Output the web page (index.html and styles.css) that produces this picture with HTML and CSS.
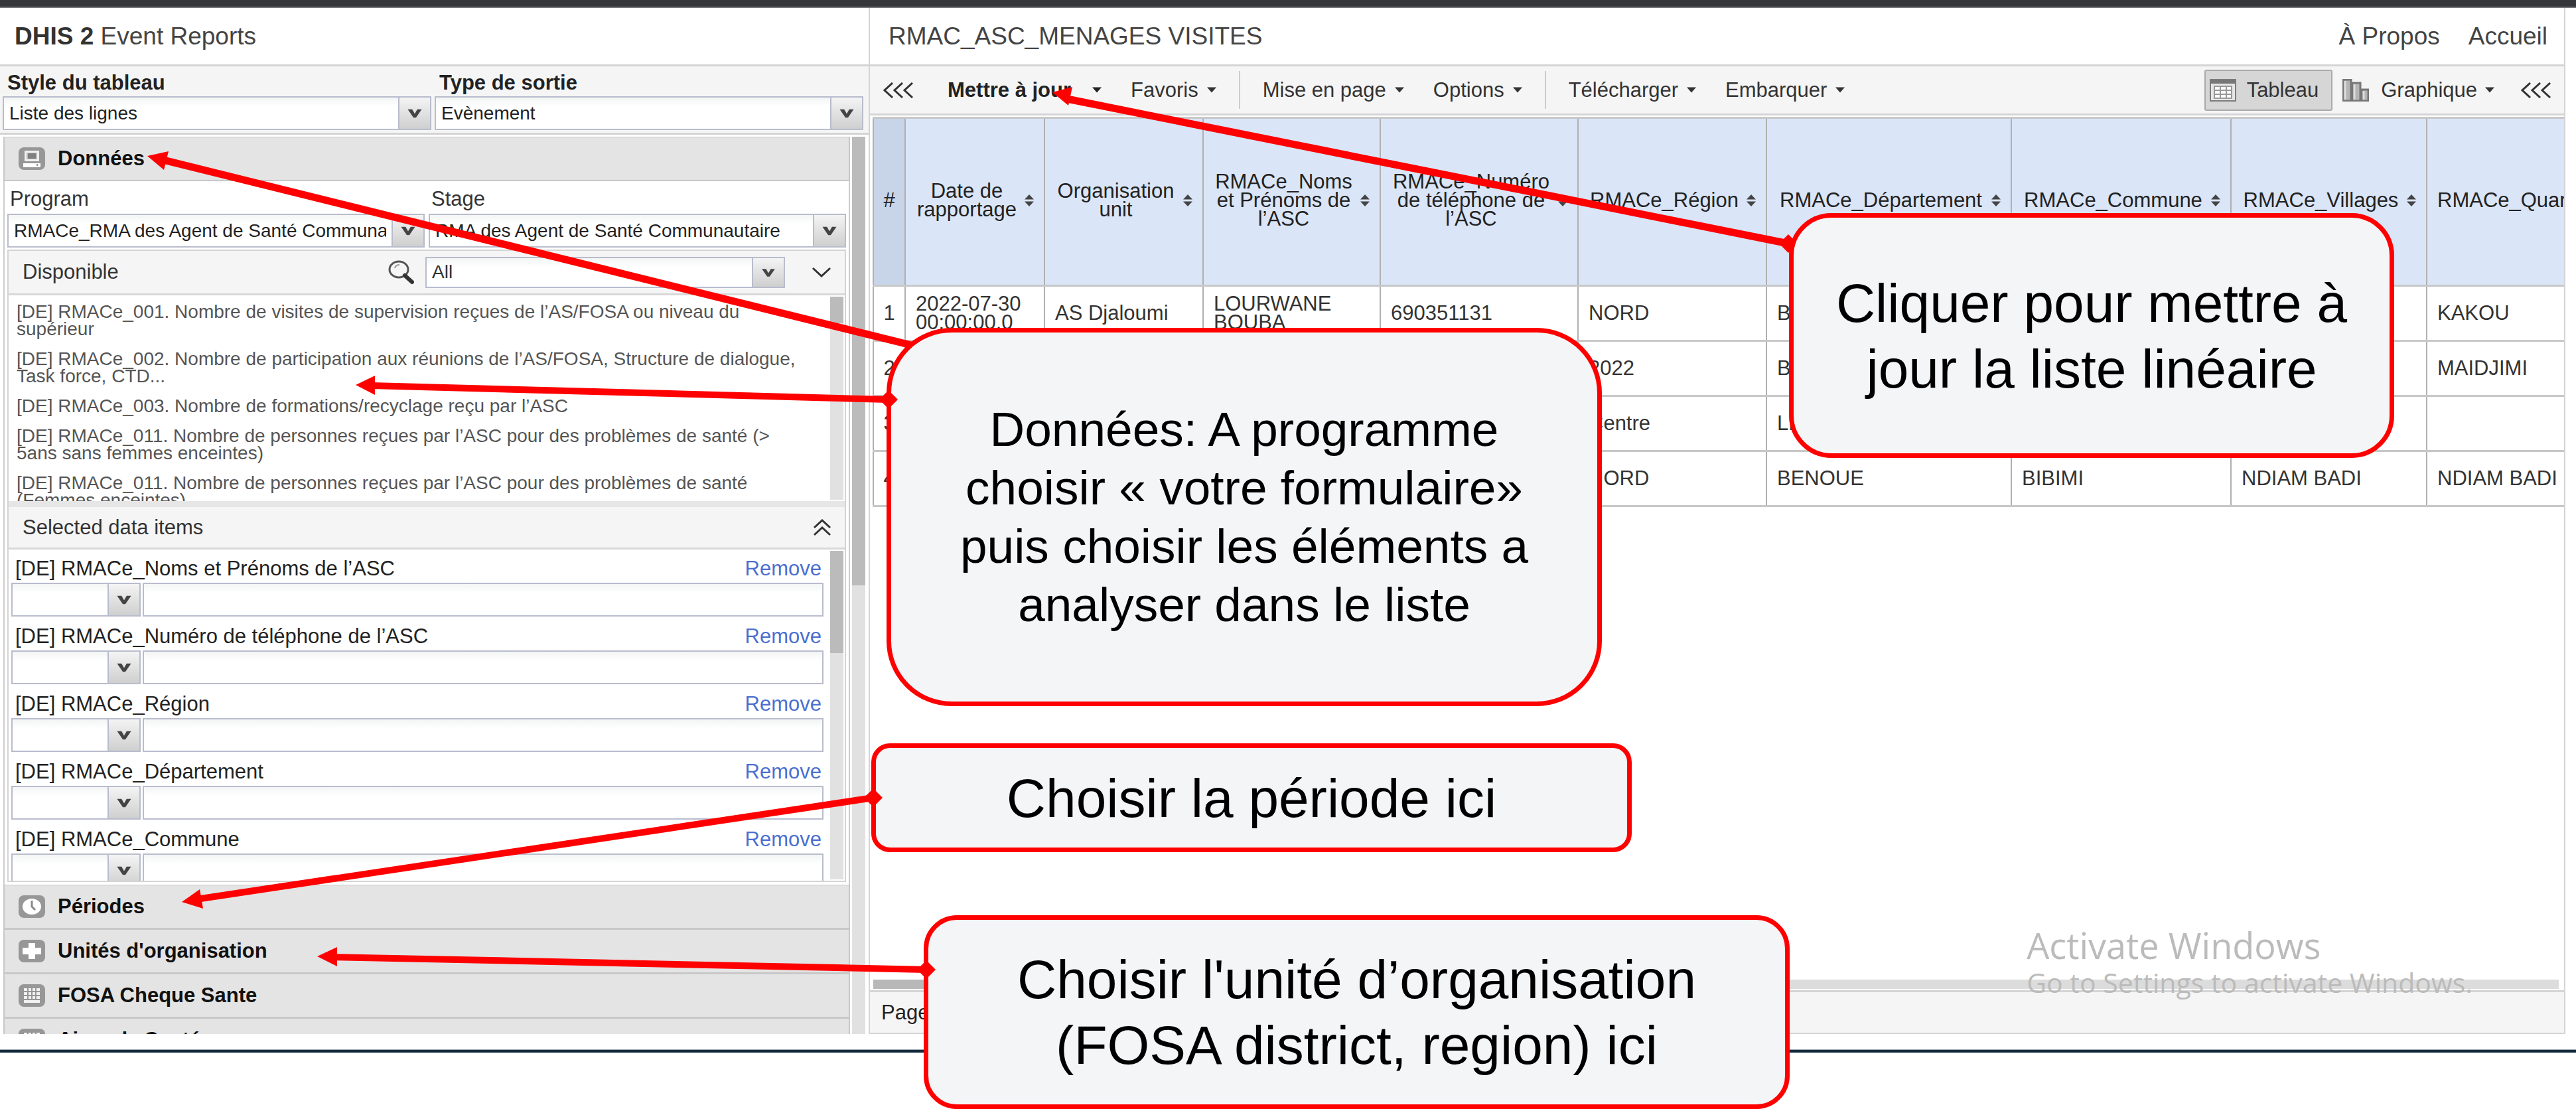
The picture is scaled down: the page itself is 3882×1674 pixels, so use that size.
FILE: index.html
```html
<!DOCTYPE html>
<html lang="fr">
<head>
<meta charset="utf-8">
<title>DHIS 2 Event Reports</title>
<link rel="stylesheet" href="styles.css">
</head>
<body>
<svg class="defs" aria-hidden="true">
  <symbol id="drop" viewBox="0 0 48 48"><path d="M13 18h7l4 7 4-7h7l-9 13h-4z" fill="#444"/></symbol>
  <symbol id="caret" viewBox="0 0 14 8"><path d="M0 0h14L7 8z" fill="currentColor"/></symbol>
  <symbol id="sort" viewBox="0 0 14 18"><path d="M0 7.500L7 0l7 7.500zM0 10.500h14L7 18z" fill="#444"/></symbol>
  <symbol id="triple" viewBox="0 0 46 24"><path d="M14 1L2 12l12 11M29 1L17 12l12 11M44 1L32 12l12 11" fill="none" stroke="#333" stroke-width="3"/></symbol>
  <symbol id="grid" viewBox="0 0 40 34"><rect width="40" height="34" rx="8" fill="#979797"/><path d="M8 6h24v22H8z" fill="#f2f2f2"/><path d="M8 11h24M8 17h24M8 23h24M14 6v17M20 6v17M26 6v17" stroke="#979797" stroke-width="2"/></symbol>
</svg>

<div class="topbar"></div>
<div class="app">
  <aside class="side">
    <header class="head"><h1 class="brand"><b>DHIS 2</b> Event Reports</h1></header>
    <div class="options">
      <div class="field">
        <label for="style">Style du tableau</label>
        <div class="combo"><select id="style"><option>Liste des lignes</option></select><svg class="trigger"><use href="#drop"/></svg></div>
      </div>
      <div class="field">
        <label for="output">Type de sortie</label>
        <div class="combo"><select id="output"><option>Evènement</option></select><svg class="trigger"><use href="#drop"/></svg></div>
      </div>
    </div>
    <div class="scroller">
      <div class="accordion">
        <button class="section"><svg class="icon" viewBox="0 0 40 34"><rect width="40" height="34" rx="8" fill="#979797"/><path d="M9 5h22v16H9z" fill="#f0f0f0"/><path d="M12 8h16v10H12z" fill="#bbb"/><path d="M14 9h12v8H14z" fill="#808080"/><path d="M7 24h26v6H7z" fill="#fff"/><path d="M28 25v3" stroke="#979797" stroke-width="2"/></svg>Données</button>
        <div class="body">
          <div class="pickers">
            <div class="field plain">
              <label for="program">Program</label>
              <div class="combo"><select id="program"><option>RMACe_RMA des Agent de Santé Communautaire</option></select><svg class="trigger"><use href="#drop"/></svg></div>
            </div>
            <div class="field plain">
              <label for="stage">Stage</label>
              <div class="combo"><select id="stage"><option>RMA des Agent de Santé Communautaire</option></select><svg class="trigger"><use href="#drop"/></svg></div>
            </div>
          </div>
          <div class="frame">
            <div class="bar">
              <span class="bar-title">Disponible</span>
              <button class="tool" aria-label="Rechercher"><svg width="40" height="38" viewBox="0 0 40 38"><ellipse cx="17" cy="15" rx="14" ry="12" fill="#f5f5f5" stroke="#555" stroke-width="3"/><path d="M11 13c1-4 4-5 7-5" fill="none" stroke="#999" stroke-width="2"/><path d="M26 24l11 10" stroke="#333" stroke-width="6" stroke-linecap="round"/></svg></button>
              <div class="combo filter"><select aria-label="Type d’élément"><option>All</option></select><svg class="trigger"><use href="#drop"/></svg></div>
              <button class="tool" aria-label="Ajouter"><svg width="30" height="16" viewBox="0 0 30 16"><path d="M2 2l13 12L28 2" fill="none" stroke="#333" stroke-width="3"/></svg></button>
            </div>
            <div class="available">
              <ul class="items">
                <li>[DE] RMACe_001. Nombre de visites de supervision reçues de l’AS/FOSA ou niveau du supérieur</li>
                <li>[DE] RMACe_002. Nombre de participation aux réunions de l’AS/FOSA, Structure de dialogue, Task force, CTD...</li>
                <li>[DE] RMACe_003. Nombre de formations/recyclage reçu par l’ASC</li>
                <li>[DE] RMACe_011. Nombre de personnes reçues par l’ASC pour des problèmes de santé (&gt; 5ans sans femmes enceintes)</li>
                <li>[DE] RMACe_011. Nombre de personnes reçues par l’ASC pour des problèmes de santé (Femmes enceintes)</li>
              </ul>
              <div class="track"><div class="thumb short"></div></div>
            </div>
            <div class="bar second">
              <span class="bar-title">Selected data items</span>
              <button class="tool" aria-label="Tout retirer"><svg width="28" height="26" viewBox="0 0 28 26"><path d="M2 13L14 2l12 11M2 24l12-11 12 11" fill="none" stroke="#333" stroke-width="3"/></svg></button>
            </div>
            <div class="selected">
              <div class="rows">
                <div class="row"><label for="f1">[DE] RMACe_Noms et Prénoms de l’ASC</label><a href="#">Remove</a><div class="combo"><select aria-label="Opérateur"><option></option></select><svg class="trigger"><use href="#drop"/></svg></div><input id="f1" type="text"></div>
                <div class="row"><label for="f2">[DE] RMACe_Numéro de téléphone de l’ASC</label><a href="#">Remove</a><div class="combo"><select aria-label="Opérateur"><option></option></select><svg class="trigger"><use href="#drop"/></svg></div><input id="f2" type="text"></div>
                <div class="row"><label for="f3">[DE] RMACe_Région</label><a href="#">Remove</a><div class="combo"><select aria-label="Opérateur"><option></option></select><svg class="trigger"><use href="#drop"/></svg></div><input id="f3" type="text"></div>
                <div class="row"><label for="f4">[DE] RMACe_Département</label><a href="#">Remove</a><div class="combo"><select aria-label="Opérateur"><option></option></select><svg class="trigger"><use href="#drop"/></svg></div><input id="f4" type="text"></div>
                <div class="row"><label for="f5">[DE] RMACe_Commune</label><a href="#">Remove</a><div class="combo"><select aria-label="Opérateur"><option></option></select><svg class="trigger"><use href="#drop"/></svg></div><input id="f5" type="text"></div>
              </div>
              <div class="track"><div class="thumb medium"></div></div>
            </div>
          </div>
        </div>
        <button class="section"><svg class="icon" viewBox="0 0 40 34"><rect width="40" height="34" rx="8" fill="#979797"/><ellipse cx="20" cy="17" rx="14" ry="12" fill="#fff"/><path d="M20 8v9l5 5" fill="none" stroke="#888" stroke-width="3"/></svg>Périodes</button>
        <button class="section"><svg class="icon" viewBox="0 0 40 34"><rect width="40" height="34" rx="8" fill="#979797"/><path d="M15 5h10v7h9v10h-9v7H15v-7H6V12h9z" fill="#fff"/></svg>Unités d'organisation</button>
        <button class="section"><svg class="icon"><use href="#grid"/></svg>FOSA Cheque Sante</button>
        <button class="section"><svg class="icon"><use href="#grid"/></svg>Aires de Santé</button>
      </div>
      <div class="track outer"><div class="thumb long"></div></div>
    </div>
  </aside>

  <main class="main">
    <header class="head">
      <h2 class="title">RMAC_ASC_MENAGES VISITES</h2>
      <nav class="links"><a href="#">À Propos</a><a href="#">Accueil</a></nav>
    </header>
    <div class="toolbar">
      <button class="btn" aria-label="Réduire"><svg class="triple"><use href="#triple"/></svg></button>
      <button class="btn update">Mettre à jour<svg class="caret"><use href="#caret"/></svg></button>
      <button class="btn">Favoris<svg class="caret"><use href="#caret"/></svg></button>
      <span class="sep"></span>
      <button class="btn">Mise en page<svg class="caret"><use href="#caret"/></svg></button>
      <button class="btn">Options<svg class="caret"><use href="#caret"/></svg></button>
      <span class="sep"></span>
      <button class="btn">Télécharger<svg class="caret"><use href="#caret"/></svg></button>
      <button class="btn">Embarquer<svg class="caret"><use href="#caret"/></svg></button>
      <div class="views">
        <button class="btn active"><svg class="icon" viewBox="0 0 40 34"><path d="M1 1h38v32H1z" fill="#e6e6e6" stroke="#7c7c7c" stroke-width="2"/><path d="M1 1h38v6H1z" fill="#777"/><path d="M6 10h28v20H6z" fill="#999"/><path d="M8 12h7v4H8zM17 12h7v4h-7zM26 12h6v4h-6zM8 18h7v4H8zM17 18h7v4h-7zM26 18h6v4h-6zM8 24h7v4H8zM17 24h7v4h-7zM26 24h6v4h-6z" fill="#fff"/></svg>Tableau</button>
        <button class="btn chart"><svg class="icon" viewBox="0 0 40 34"><path d="M1 1h12v32H1zM15 6h12v27H15zM29 16h10v17H29z" fill="#b5b5b5" stroke="#777" stroke-width="3"/><path d="M4 3v28M18 8v23M32 18v13" stroke="#ddd" stroke-width="3"/></svg>Graphique<svg class="caret"><use href="#caret"/></svg></button>
        <button class="btn" aria-label="Réduire"><svg class="triple"><use href="#triple"/></svg></button>
      </div>
    </div>
    <div class="result">
      <table class="grid">
        <colgroup><col class="c0"><col class="c1"><col class="c2"><col class="c3"><col class="c4"><col class="c5"><col class="c6"><col class="c7"><col class="c8"><col></colgroup>
        <thead>
          <tr>
            <th class="num">#</th>
            <th><div class="th"><span>Date de rapportage</span><svg><use href="#sort"/></svg></div></th>
            <th><div class="th"><span>Organisation unit</span><svg><use href="#sort"/></svg></div></th>
            <th><div class="th"><span>RMACe_Noms et Prénoms de l’ASC</span><svg><use href="#sort"/></svg></div></th>
            <th><div class="th"><span>RMACe_Numéro de téléphone de l’ASC</span><svg><use href="#sort"/></svg></div></th>
            <th><div class="th"><span>RMACe_Région</span><svg><use href="#sort"/></svg></div></th>
            <th><div class="th"><span>RMACe_Département</span><svg><use href="#sort"/></svg></div></th>
            <th><div class="th"><span>RMACe_Commune</span><svg><use href="#sort"/></svg></div></th>
            <th><div class="th"><span>RMACe_Villages</span><svg><use href="#sort"/></svg></div></th>
            <th class="cut">RMACe_Quartiers</th>
          </tr>
        </thead>
        <tbody>
          <tr><td class="num">1</td><td>2022-07-30 00:00:00.0</td><td>AS Djaloumi</td><td>LOURWANE BOUBA</td><td>690351131</td><td>NORD</td><td>BENOUE</td><td></td><td></td><td class="cut">KAKOU</td></tr>
          <tr><td class="num">2</td><td></td><td></td><td></td><td></td><td>2022</td><td>BENOUE</td><td></td><td></td><td class="cut">MAIDJIMI</td></tr>
          <tr><td class="num">3</td><td></td><td></td><td></td><td></td><td>Centre</td><td>LEKIE</td><td></td><td></td><td class="cut"></td></tr>
          <tr><td class="num">4</td><td></td><td></td><td></td><td></td><td>NORD</td><td>BENOUE</td><td>BIBIMI</td><td>NDIAM BADI</td><td class="cut">NDIAM BADI</td></tr>
        </tbody>
      </table>
      <div class="hscroll"><div class="hthumb"></div></div>
    </div>
    <footer class="pager">Page</footer>
    <div class="watermark"><p class="wm-title">Activate Windows</p><p class="wm-text">Go to Settings to activate Windows.</p></div>
  </main>
</div>
<div class="edge"></div>

<svg class="arrows" width="3882" height="1674" viewBox="0 0 3882 1674" aria-hidden="true">
  <g stroke="red" stroke-width="11">
    <path d="M246 241L1373 520"/><path d="M1608 149L2695 367"/>
  </g>
  <g fill="red">
    <path d="M222 235l32-7-7 28z"/><path d="M1586 139l30-8-6 28z"/>
    <path d="M2695 353l14 14-14 14-14-14z"/>
  </g>
</svg>
<div class="callout update-note">Cliquer pour mettre à jour la liste linéaire</div>
<div class="callout data-note">Données: A programme choisir « votre formulaire» puis choisir les éléments a analyser dans le liste</div>
<div class="callout period-note">Choisir la période ici</div>
<div class="callout unit-note">Choisir l'unité d’organisation (FOSA district, region) ici</div>
<svg class="arrows" width="3882" height="1674" viewBox="0 0 3882 1674" aria-hidden="true">
  <g stroke="red" stroke-width="10">
    <path d="M560 581L1339 602"/><path d="M296 1355L1316 1202"/><path d="M502 1442L1396 1461"/>
  </g>
  <g fill="red">
    <path d="M536 580l29-14v29z"/><path d="M274 1359l27-19 5 29z"/><path d="M478 1441l30-14v29z"/>
    <path d="M1339 588l14 14-14 14-14-14z"/><path d="M1316 1188l14 14-14 14-14-14z"/><path d="M1396 1447l14 14-14 14-14-14z"/>
  </g>
</svg>
</body>
</html>
```

FILE: styles.css
```css
* { box-sizing: border-box; }

body {
  margin: 0;
  position: relative;
  min-height: 100vh;
  background: #fff;
  color: #222;
  font: 31px/36px "Liberation Sans", Arial, sans-serif;
}

button, select, input { font: inherit; color: inherit; border-radius: 0; }
button { background: none; border: 0; padding: 0; }
a { text-decoration: none; color: inherit; }
h1, h2, p, ul { margin: 0; padding: 0; font-weight: normal; }
svg { flex: none; display: block; }
.defs { position: absolute; width: 0; height: 0; }

.topbar { height: 12px; background: #35363a; border-bottom: 2px solid #77787a; }
.app {
  display: grid;
  grid-template-columns: 1309px minmax(0, 1fr);
  padding-right: 16px;
}
.edge { margin-top: 23px; height: 5px; background: #12283c; border-top: 1px solid #9aa3ab; }

.head {
  height: 88px;
  display: flex;
  align-items: center;
  justify-content: space-between;
  border-bottom: 3px solid #d4d4d4;
  color: #444;
}
.brand, .title, .links { font-size: 37px; line-height: 44px; }
.brand { padding-left: 22px; }
.brand b { color: #333; }
.title { padding-left: 28px; }
.links { display: flex; gap: 43px; padding-right: 25px; }

/* Left panel */
.options {
  display: grid;
  grid-template-columns: 1fr 1fr;
  gap: 5px;
  padding: 7px 8px 4px 4px;
  background: #f5f5f5;
  border-bottom: 3px solid #d4d4d4;
}
.field { min-width: 0; }
.field label { display: block; padding: 0 0 2px 7px; font-weight: bold; }
.field.plain label { padding: 0 0 4px 4px; font-weight: normal; color: #333; }
.combo {
  display: flex;
  height: 51px;
  background: linear-gradient(#f3f5f5, #fff 14px);
  border: 2px solid #b9bccd;
  font-size: 28px;
}
.combo select {
  flex: 1;
  min-width: 0;
  margin-right: 8px;
  padding: 0 0 0 8px;
  border: 0;
  background: none;
  appearance: none;
  overflow: hidden;
}
.trigger {
  width: 48px;
  height: 47px;
  background: linear-gradient(#f4f4f4, #cfcfcf);
  border-left: 2px solid #b9bccd;
}
.scroller { display: flex; padding: 3px 5px 0; gap: 3px; }
.accordion { flex: 1; min-width: 0; max-height: 1352px; overflow: hidden; }
.section {
  width: 100%;
  height: 67px;
  display: flex;
  align-items: center;
  gap: 19px;
  padding-left: 21px;
  background: #e4e4e4;
  border: 2px solid #c8c8c8;
  border-top-width: 1px;
  color: #111;
  font-weight: bold;
}
.icon { width: 40px; height: 34px; }
.body {
  padding: 9px 4px 4px 4px;
  border: 2px solid #ccc;
  border-width: 0 2px;
}
.pickers { display: grid; grid-template-columns: 1fr 1fr; gap: 6px; }
.frame { margin-top: 3px; border: 2px solid #d4d4d4; }
.bar {
  height: 67px;
  display: flex;
  align-items: center;
  padding: 0 20px 0 21px;
  background: #f5f5f5;
  border-bottom: 3px solid #d8d8d8;
  color: #333;
}
.bar-title { flex: 1; }
.combo.filter { width: 542px; height: 47px; margin: 0 40px 0 17px; }
.filter .trigger { height: 43px; }
.available { display: flex; height: 310px; overflow: hidden; padding: 2px; }
.items {
  flex: 1;
  padding: 1px 0 0 10px;
  list-style: none;
  font-size: 28px;
  line-height: 26px;
  color: #555;
}
.items li { padding: 9px 30px 10px 0; }
.track { width: 20px; background: #e1e1e1; }
.thumb { background: #bbb; }
.short { height: 40px; }
.medium { height: 154px; }
.long { height: 676px; }
.bar.second { height: 73px; border-top: 9px solid #e6e6e6; }
.selected { display: flex; height: 499px; overflow: hidden; padding: 2px; }
.rows { flex: 1; padding: 9px 10px 0 2px; }
.row {
  display: grid;
  grid-template-columns: 195px 1fr auto;
  column-gap: 3px;
  row-gap: 3px;
  margin-bottom: 12px;
}
.row label { grid-column: 1 / 3; padding-left: 6px; }
.row a { padding-right: 3px; color: #4b6fd0; }
.row input {
  grid-column: 2 / 4;
  min-width: 0;
  height: 51px;
  padding: 0 8px;
  border: 2px solid #b9bccd;
  background: linear-gradient(#f3f5f5, #fff 14px);
}

/* Right panel */
.main {
  position: relative;
  min-width: 0;
  display: flex;
  flex-direction: column;
  border: 2px solid #d4d4d4;
  border-top: 0;
}
.toolbar {
  height: 74px;
  display: flex;
  align-items: center;
  background: #f5f5f5;
  border-bottom: 3px solid #d4d4d4;
  color: #333;
}
.btn { display: flex; align-items: center; gap: 13px; padding: 0 22px; white-space: nowrap; }
.toolbar > .btn:first-child { padding-left: 20px; }
.update { gap: 32px; margin-left: 7px; font-weight: bold; color: #222; }
.caret { width: 14px; height: 9px; }
.triple { width: 46px; height: 24px; }
.sep { width: 2px; height: 57px; margin: 0 12px; background: #ccc; }
.views { margin-left: auto; display: flex; align-items: center; }
.views .btn:last-child { padding: 0 19px 0 21px; }
.active { height: 62px; gap: 16px; padding: 0 19px 0 6px; background: #d6d6d6; border: 2px solid #aaa; border-radius: 3px; }
.views .chart { gap: 18px; padding: 0 19px 0 15px; }
.chart .caret { margin-left: -6px; }
.result { flex: 1; display: flex; flex-direction: column; padding: 2px 0 2px 4px; overflow: hidden; }
.grid { width: 100%; table-layout: fixed; border-collapse: collapse; line-height: 28px; color: #333; }
.grid th, .grid td { padding: 0 15px; border: 2px solid #b0b0b0; border-top: 3px solid #c8c8c8; border-bottom: 3px solid #c8c8c8; text-align: left; font-weight: normal; }
.grid th { height: 253px; padding-bottom: 4px; background: #dae5f7; color: #222; }
.grid td { height: 83px; }
.grid th.num, .grid td.num { padding-left: 0; padding-right: 0; text-align: center; }
.grid th.num { background: #c8d4e7; }
.grid .cut { overflow: hidden; white-space: nowrap; border-right: 0; }
.c0 { width: 48px; } .c1 { width: 210px; } .c2 { width: 239px; } .c3 { width: 267px; } .c4 { width: 298px; }
.c5 { width: 284px; } .c6 { width: 369px; } .c7 { width: 331px; } .c8 { width: 295px; }
.th { display: flex; align-items: center; gap: 10px; }
.th span { flex: 1; text-align: center; }
.th svg { width: 14px; height: 18px; }
.hscroll { margin: auto 8px 0 1px; height: 14px; background: #dcdcdc; }
.hthumb { width: 52%; height: 14px; background: #b8b8b8; }
.pager { height: 64px; padding: 13px 17px; background: #f5f5f5; border-top: 3px solid #d4d4d4; }
.watermark {
  position: absolute;
  right: 138px;
  bottom: 52px;
  color: #bbb;
  font-family: "Open Sans", "Noto Sans", sans-serif;
}
.wm-title { font-size: 54px; line-height: 64px; }
.wm-text { font-size: 41px; line-height: 48px; }

/* Annotations laid over the page */
.arrows { position: absolute; left: 0; top: 0; pointer-events: none; }
.callout {
  position: absolute;
  display: flex;
  align-items: center;
  justify-content: center;
  background: #f4f5f7;
  border: 7px solid red;
  color: #000;
  font-size: 82px;
  line-height: 99px;
  text-align: center;
}
.update-note { left: 2696px; top: 321px; width: 912px; height: 369px; padding: 0 50px; border-radius: 64px; }
.data-note { left: 1336px; top: 494px; width: 1078px; height: 570px; padding: 0 90px; border-radius: 98px; font-size: 73px; line-height: 88px; }
.period-note { left: 1313px; top: 1120px; width: 1146px; height: 164px; border-radius: 28px; }
.unit-note { left: 1392px; top: 1379px; width: 1305px; height: 292px; padding: 0 80px; border-radius: 50px; }
```
